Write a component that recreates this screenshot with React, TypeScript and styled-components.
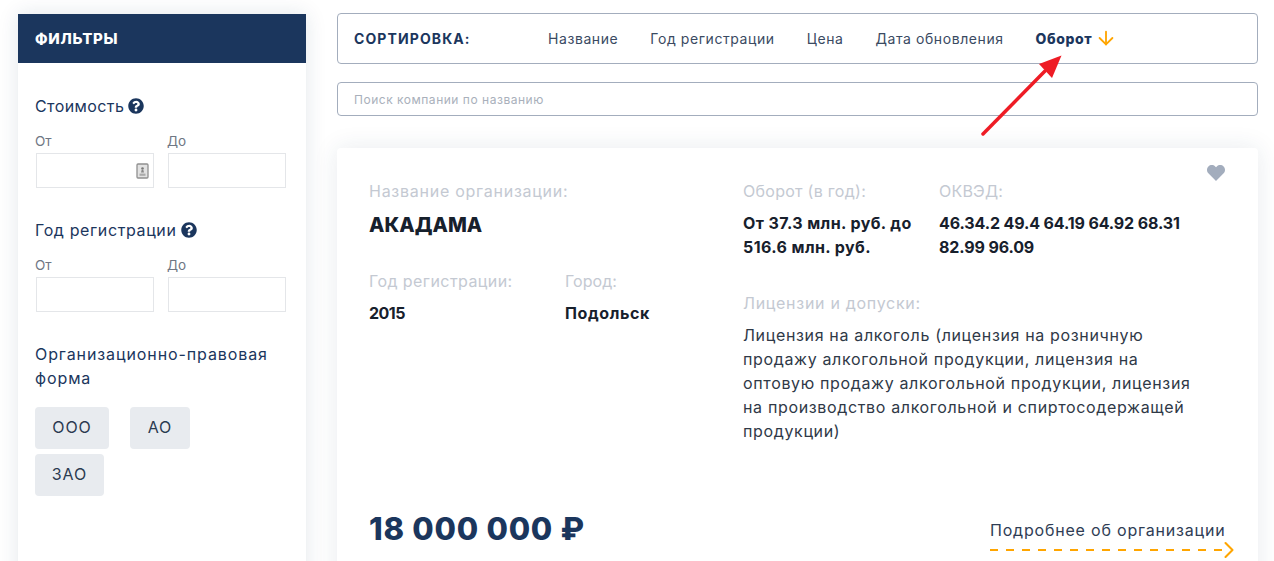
import React from "react";
import styled, { createGlobalStyle } from "styled-components";
import { ArrowDown, ChevronRight } from "lucide-react";
import { FaQuestionCircle } from "react-icons/fa";

const Global = createGlobalStyle`
  html, body { margin: 0; padding: 0; background: #fff; height: 561px; overflow: hidden; }
  * { box-sizing: border-box; }
  body { font-family: Inter, "Noto Sans", "Liberation Sans", sans-serif; color: #1b365d; }
`;

const Page = styled.div`
  position: relative;
  display: flex;
  gap: 31px;
  height: 561px;
  padding: 14px 16px 0 18px;
  overflow: hidden;
`;
const Sidebar = styled.aside`
  width: 288px;
  flex: none;
  height: 600px;
  background: #fff;
  box-shadow: 0 0 20px rgba(27, 54, 93, 0.12);
`;
const SideHeader = styled.div`
  height: 49px;
  background: #1b365d;
  color: #fff;
  display: flex;
  align-items: center;
  padding-left: 17px;
  padding-bottom: 1px;
  font-size: 15px;
  font-weight: 800;
  letter-spacing: 0.75px;
`;
const SideBody = styled.div`
  padding: 31px 17px 0;
`;
const Group = styled.section`
  margin-bottom: 30px;
`;
const GroupTitle = styled.div<{ $ls?: number }>`
  display: flex;
  align-items: center;
  gap: 4px;
  font-size: 16px;
  line-height: 24px;
  letter-spacing: ${(p) => p.$ls ?? 0.4}px;
  color: #1b365d;
`;
const Fields = styled.div`
  display: grid;
  grid-template-columns: 118px 118px;
  column-gap: 14px;
  margin-top: 14px;
  padding-left: 1px;
`;
const Field = styled.label`
  display: block;
  font-size: 13.5px;
  line-height: 18px;
  color: #6f7784;
  margin-left: -1px;
`;
const FieldBox = styled.div`
  position: relative;
  height: 35px;
  width: 118px;
  margin: 3px 0 0 1px;
  border: 1px solid #e4e6e9;
  background: #fff;
`;
const KeyIcon = styled.svg`
  position: absolute;
  right: 4px;
  top: 9px;
  width: 13px;
  height: 16px;
`;
const OrgTitle = styled(GroupTitle)`
  display: block;
`;
const Chips = styled.div`
  display: flex;
  flex-wrap: wrap;
  width: 240px;
  margin-top: 17px;
  column-gap: 21px;
  row-gap: 5px;
`;
const Chip = styled.div<{ $w: number }>`
  width: ${(p) => p.$w}px;
  height: 42px;
  border-radius: 4px;
  background: #e8ebef;
  color: #2b3a50;
  display: flex;
  align-items: center;
  justify-content: center;
  font-size: 16px;
  letter-spacing: 1px;
  padding-bottom: 2px;
`;
const Main = styled.main`
  width: 921px;
  flex: none;
`;
const SortBar = styled.div`
  height: 51px;
  margin-top: -1px;
  border: 1px solid #a3adbd;
  border-radius: 4px;
  display: flex;
  align-items: center;
  padding: 0 0 1px 16px;
`;
const SortLabel = styled.div`
  width: 194px;
  font-size: 14px;
  font-weight: 700;
  letter-spacing: 1.1px;
  color: #1b365d;
`;
const SortList = styled.div`
  display: flex;
  gap: 32px;
  align-items: center;
`;
const SortItem = styled.div<{ $active?: boolean }>`
  display: flex;
  align-items: center;
  gap: 3px;
  font-size: 14px;
  font-weight: ${(p) => (p.$active ? 800 : 400)};
  letter-spacing: ${(p) => (p.$active ? "0.6px" : "0.58px")};
  color: ${(p) => (p.$active ? "#1b365d" : "#3a4a62")};
`;
const Search = styled.div`
  height: 34px;
  margin-top: 18px;
  border: 1px solid #a3adbd;
  border-radius: 4px;
  display: flex;
  align-items: center;
  padding-left: 16px;
  font-size: 12px;
  letter-spacing: 0.52px;
  color: #a9b0bb;
`;
const Card = styled.article`
  margin-top: 32px;
  height: 460px;
  border-radius: 4px;
  background: #fff;
  box-shadow: 0 0 24px rgba(27, 54, 93, 0.1);
  padding: 31px 32px 0;
  position: relative;
  display: flex;
  flex-direction: column;
`;
const Columns = styled.div`
  display: grid;
  grid-template-columns: 374px 1fr;
  height: 314px;
`;
const Label = styled.div<{ $ls?: number; $top?: number }>`
  font-size: 16px;
  line-height: 24px;
  letter-spacing: ${(p) => p.$ls ?? 0.22}px;
  margin-top: ${(p) => p.$top ?? 0}px;
  color: #c4c9d2;
`;
const CompanyName = styled.div`
  font-size: 20px;
  line-height: 28px;
  font-weight: 800;
  letter-spacing: 0.05px;
  color: #17202c;
  margin-top: 8px;
`;
const Pair = styled.div<{ $first: number; $top: number }>`
  display: grid;
  grid-template-columns: ${(p) => p.$first}px 1fr;
  margin-top: ${(p) => p.$top}px;
`;
const Value = styled.div<{ $ls?: number }>`
  font-size: 16px;
  line-height: 24px;
  font-weight: 700;
  letter-spacing: ${(p) => p.$ls ?? 0}px;
  color: #17202c;
  margin-top: 8px;
`;
const LicenseText = styled.div`
  width: 470px;
  font-size: 16px;
  line-height: 24px;
  letter-spacing: 0.65px;
  color: #2f3947;
  margin-top: 8px;
`;
const Footer = styled.div`
  display: flex;
  justify-content: space-between;
  align-items: flex-start;
  margin-top: 16px;
`;
const Price = styled.div`
  font-size: 31px;
  line-height: 40px;
  font-weight: 800;
  letter-spacing: 0.75px;
  color: #1b365d;
`;
const More = styled.div`
  width: 243px;
  margin-right: -7px;
  margin-top: 9px;
  font-size: 16px;
  line-height: 24px;
  letter-spacing: 0.8px;
  color: #2f3d55;
  position: relative;
`;
const Dashes = styled.div`
  height: 2px;
  margin-top: 7px;
  margin-right: 3px;
  background: repeating-linear-gradient(90deg, #ffa500 0 8px, transparent 8px 16px);
`;
const MoreChevron = styled(ChevronRight)`
  position: absolute;
  right: -9.5px;
  bottom: -13px;
  color: #ffa500;
`;
const Heart = styled.svg`
  position: absolute;
  top: 17px;
  right: 33px;
  width: 18px;
  height: 16px;
`;
const Annotation = styled.svg`
  position: absolute;
  left: 970px;
  top: 45px;
  width: 100px;
  height: 100px;
  pointer-events: none;
`;

const HintIcon = () => <FaQuestionCircle size={16} color="#1b365d" />;

const RangeFields = ({ icon }: { icon?: boolean }) => (
  <Fields>
    <Field>
      От
      <FieldBox>
        {icon && (
          <KeyIcon viewBox="0 0 13 16">
            <rect x="1" y="1" width="11" height="14" rx="1" fill="#e2e2e2" stroke="#909090" strokeWidth="1.3" />
            <circle cx="6.5" cy="5.5" r="1.3" fill="#777" />
            <path d="M5.6 7h1.8l.6 2.6H5z" fill="#888" />
            <rect x="3.5" y="10.6" width="6" height="2.2" fill="#aaa" />
          </KeyIcon>
        )}
      </FieldBox>
    </Field>
    <Field>
      До
      <FieldBox />
    </Field>
  </Fields>
);

export default function App() {
  return (
    <Page>
      <Global />
      <Sidebar>
        <SideHeader>ФИЛЬТРЫ</SideHeader>
        <SideBody>
          <Group>
            <GroupTitle $ls={0.4}>
              Стоимость <HintIcon />
            </GroupTitle>
            <RangeFields icon />
          </Group>
          <Group>
            <GroupTitle $ls={0.62}>
              Год регистрации <HintIcon />
            </GroupTitle>
            <RangeFields />
          </Group>
          <OrgTitle $ls={0.9}>Организационно-правовая форма</OrgTitle>
          <Chips>
            <Chip $w={74}>ООО</Chip>
            <Chip $w={60}>АО</Chip>
            <Chip $w={69}>ЗАО</Chip>
          </Chips>
        </SideBody>
      </Sidebar>
      <Main>
        <SortBar>
          <SortLabel>СОРТИРОВКА:</SortLabel>
          <SortList>
            <SortItem>Название</SortItem>
            <SortItem>Год регистрации</SortItem>
            <SortItem>Цена</SortItem>
            <SortItem>Дата обновления</SortItem>
            <SortItem $active>
              Оборот <ArrowDown size={22} color="#ffa500" strokeWidth={2} />
            </SortItem>
          </SortList>
        </SortBar>
        <Search>Поиск компании по названию</Search>
        <Card>
          <Heart viewBox="0 0 18 16">
            <path d="M9 16 1.6 8.6C-.5 6.5-.5 3.3 1.4 1.4 3.3-.4 6.3-.4 8.2 1.4L9 2.2l.8-.8c1.9-1.8 4.9-1.8 6.8 0 1.9 1.9 1.9 5.1-.2 7.2z" fill="#a3adbd" />
          </Heart>
          <Columns>
            <div>
              <Label $ls={0.74}>Название организации:</Label>
              <CompanyName>АКАДАМА</CompanyName>
              <Pair $first={196} $top={30}>
                <div>
                  <Label $ls={0.42}>Год регистрации:</Label>
                  <Value $ls={-0.5}>2015</Value>
                </div>
                <div>
                  <Label $ls={0.05}>Город:</Label>
                  <Value $ls={0.6}>Подольск</Value>
                </div>
              </Pair>
            </div>
            <div>
              <Pair $first={196} $top={0}>
                <div>
                  <Label $ls={0.28}>Оборот (в год):</Label>
                  <Value $ls={0.4}>
                    От 37.3 млн. руб. до
                    <br />
                    516.6 млн. руб.
                  </Value>
                </div>
                <div>
                  <Label>ОКВЭД:</Label>
                  <Value $ls={-0.13}>
                    46.34.2 49.4 64.19 64.92 68.31
                    <br />
                    82.99 96.09
                  </Value>
                </div>
              </Pair>
              <Label $ls={0.7} $top={32}>Лицензии и допуски:</Label>
              <LicenseText>
                Лицензия на алкоголь (лицензия на розничную
                <br />
                продажу алкогольной продукции, лицензия на
                <br />
                оптовую продажу алкогольной продукции, лицензия
                <br />
                на производство алкогольной и спиртосодержащей
                <br />
                продукции)
              </LicenseText>
            </div>
          </Columns>
          <Footer>
            <Price>18 000 000 ₽</Price>
            <More>
              Подробнее об организации
              <Dashes />
              <MoreChevron size={28} strokeWidth={1.8} />
            </More>
          </Footer>
        </Card>
      </Main>
      <Annotation viewBox="0 0 100 100">
        <path d="M13 89 L75 26" stroke="#ee1c25" strokeWidth="3.5" strokeLinecap="round" />
        <polygon points="91.5,10.5 69,19 82,33" fill="#ee1c25" />
      </Annotation>
    </Page>
  );
}
